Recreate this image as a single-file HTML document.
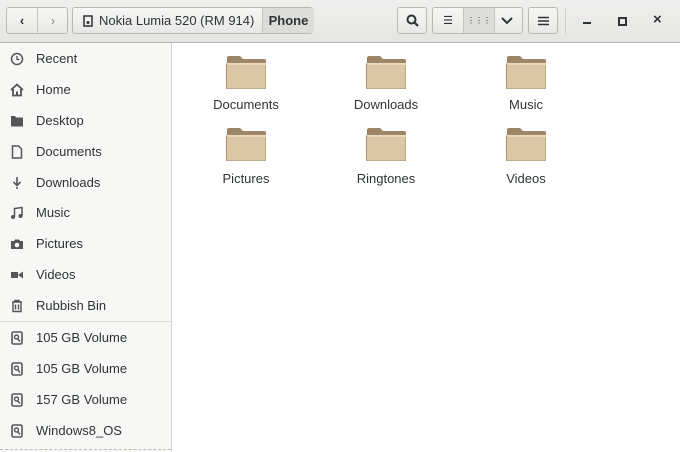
<html><head><style>
body{margin:0;width:680px;height:452px;overflow:hidden;font-family:"Liberation Sans",sans-serif;font-size:13px;color:#2e3436;background:#fff;position:relative}
.hdr{position:absolute;left:0;top:0;width:680px;height:42px;background:linear-gradient(#f0efee,#e6e5e3);border-bottom:1px solid #b6b6b3}
.btn{position:absolute;top:7px;height:27px;border:1px solid #b8b8b4;border-radius:3px;background:linear-gradient(#f6f6f5,#e8e8e6);box-sizing:border-box;display:flex;align-items:center;justify-content:center;color:#2e3436}
.side{position:absolute;left:0;top:43px;width:171px;height:409px;background:#f7f7f6;border-right:1px solid #cfcfcd}
.it{position:absolute;left:36px;font-size:13px}
.ic{position:absolute;left:10px;width:14px;height:14px}
.fold{position:absolute;width:40px;height:34px}
.lab{position:absolute;width:140px;text-align:center;font-size:13px}
</style></head><body>
<div class="hdr">
<div class="btn" style="left:6px;width:62px"><span style="position:absolute;left:0;width:30px;height:25px;border-right:1px solid #c4c4c0;display:flex;align-items:center;justify-content:center;font-weight:bold">&#8249;</span><span style="position:absolute;left:31px;width:30px;text-align:center;color:#888">&#8250;</span></div>
<div class="btn" style="left:72px;width:241px;justify-content:flex-start"><svg style="margin-left:10px" width="10" height="12" viewBox="0 0 10 12"><rect x="1" y="1" width="8" height="10" fill="none" stroke="#2e3436" stroke-width="1.5"/><circle cx="5" cy="7.5" r="1.5" fill="#2e3436"/></svg><span style="margin-left:6px">Nokia Lumia 520 (RM 914)</span><span style="position:absolute;left:189px;top:0;height:25px;width:51px;border-left:1px solid #c4c4c0;background:#dcdcd9;display:flex;align-items:center;justify-content:center;font-weight:bold">Phone</span></div>
<div class="btn" style="left:397px;width:30px"><svg width="13" height="13" viewBox="0 0 13 13"><circle cx="5.5" cy="5.5" r="4" fill="none" stroke="#2e3436" stroke-width="2"/><path d="M8.5 8.5L12 12" stroke="#2e3436" stroke-width="2.2"/></svg></div>
<div class="btn" style="left:432px;width:91px"><span style="position:absolute;left:0;width:30px;text-align:center;font-size:11px">&#9776;</span><span style="position:absolute;left:30px;width:30px;height:25px;background:#dcdcd9;border-left:1px solid #c4c4c0;border-right:1px solid #c4c4c0;display:flex;align-items:center;justify-content:center;font-size:8px">&#8942;&#8942;&#8942;</span><svg style="position:absolute;left:68px" width="12" height="8" viewBox="0 0 12 8"><path d="M1 1L6 6L11 1" fill="none" stroke="#2e3436" stroke-width="2"/></svg></div>
<div class="btn" style="left:528px;width:30px"><svg width="11" height="10"><path d="M0 1.5H11M0 5H11M0 8.5H11" stroke="#2e3436" stroke-width="1.6"/></svg></div>
<div style="position:absolute;left:565px;top:8px;width:1px;height:26px;background:#cdcdca"></div>
<div style="position:absolute;left:583px;top:22px;width:8px;height:2px;background:#2e3436"></div>
<div style="position:absolute;left:618px;top:17px;width:5px;height:5px;border:2px solid #2e3436"></div>
<div style="position:absolute;left:653px;top:11px;font-size:15px;font-weight:bold">&#215;</div>
</div>
<div class="side">
<svg class="ic" style="top:9px" viewBox="0 0 14 14"><circle cx="7" cy="7" r="5.5" fill="none" stroke="#555" stroke-width="1.5"/><path d="M7 4V7.5H9.5" fill="none" stroke="#555" stroke-width="1.3"/></svg><div class="it" style="top:8px">Recent</div>
<svg class="ic" style="top:40px" viewBox="0 0 14 14"><path d="M1 7L7 1.5L13 7M3 6V12.5H11V6" fill="none" stroke="#555" stroke-width="1.8"/><rect x="6" y="8.5" width="2" height="4" fill="#555"/></svg><div class="it" style="top:39px">Home</div>
<svg class="ic" style="top:71px" viewBox="0 0 14 14"><path d="M1 2H5L6 3.5H13V12.5H1Z" fill="#555"/></svg><div class="it" style="top:70px">Desktop</div>
<svg class="ic" style="top:102px" viewBox="0 0 14 14"><path d="M2.5 1H8.5L11.5 4V13H2.5Z" fill="none" stroke="#555" stroke-width="1.5"/></svg><div class="it" style="top:101px">Documents</div>
<svg class="ic" style="top:133px" viewBox="0 0 14 14"><path d="M7 1V9M3.5 6L7 9.5L10.5 6" fill="none" stroke="#555" stroke-width="1.6"/><circle cx="7" cy="12" r="1" fill="#555"/></svg><div class="it" style="top:132px">Downloads</div>
<svg class="ic" style="top:163px" viewBox="0 0 14 14"><path d="M4.5 11V2.5L12 1.5V10" fill="none" stroke="#555" stroke-width="1.5"/><circle cx="3" cy="11" r="2" fill="#555"/><circle cx="10.5" cy="10" r="2" fill="#555"/></svg><div class="it" style="top:162px">Music</div>
<svg class="ic" style="top:194px" viewBox="0 0 14 14"><path d="M1 4H4L5 2.5H9L10 4H13V12H1Z" fill="#555"/><circle cx="7" cy="8" r="2.3" fill="#f7f7f6"/></svg><div class="it" style="top:193px">Pictures</div>
<svg class="ic" style="top:225px" viewBox="0 0 14 14"><rect x="1" y="4" width="7" height="6" fill="#555"/><path d="M8 7L13 3.5V10.5Z" fill="#555"/></svg><div class="it" style="top:224px">Videos</div>
<svg class="ic" style="top:256px" viewBox="0 0 14 14"><path d="M2 3H12M5 3V1.5H9V3M3 3V12.5H11V3M5.5 5.5V10.5M8.5 5.5V10.5" fill="none" stroke="#555" stroke-width="1.4"/></svg><div class="it" style="top:255px">Rubbish Bin</div>
<div style="position:absolute;left:0;top:278px;width:171px;height:1px;background:#dcdcda"></div>
<svg class="ic" style="top:288px" viewBox="0 0 14 14"><rect x="2" y="1" width="10" height="12" rx="1.5" fill="none" stroke="#555" stroke-width="1.6"/><circle cx="6.5" cy="6" r="2" fill="none" stroke="#555" stroke-width="1.4"/><path d="M7.5 7.5L10 10.5" stroke="#555" stroke-width="1.4"/></svg><div class="it" style="top:287px">105 GB Volume</div>
<svg class="ic" style="top:319px" viewBox="0 0 14 14"><rect x="2" y="1" width="10" height="12" rx="1.5" fill="none" stroke="#555" stroke-width="1.6"/><circle cx="6.5" cy="6" r="2" fill="none" stroke="#555" stroke-width="1.4"/><path d="M7.5 7.5L10 10.5" stroke="#555" stroke-width="1.4"/></svg><div class="it" style="top:318px">105 GB Volume</div>
<svg class="ic" style="top:350px" viewBox="0 0 14 14"><rect x="2" y="1" width="10" height="12" rx="1.5" fill="none" stroke="#555" stroke-width="1.6"/><circle cx="6.5" cy="6" r="2" fill="none" stroke="#555" stroke-width="1.4"/><path d="M7.5 7.5L10 10.5" stroke="#555" stroke-width="1.4"/></svg><div class="it" style="top:349px">157 GB Volume</div>
<svg class="ic" style="top:381px" viewBox="0 0 14 14"><rect x="2" y="1" width="10" height="12" rx="1.5" fill="none" stroke="#555" stroke-width="1.6"/><circle cx="6.5" cy="6" r="2" fill="none" stroke="#555" stroke-width="1.4"/><path d="M7.5 7.5L10 10.5" stroke="#555" stroke-width="1.4"/></svg><div class="it" style="top:380px">Windows8_OS</div>
<div style="position:absolute;left:0;top:406px;width:171px;border-top:1px dashed #bbb"></div>
</div>
<svg width="0" height="0"><defs><g id="f"><path d="M1 3Q1 1 3 1H14L17 4H38Q40 4 40 6V32H1Z" fill="#9c8566"/><rect x="0.5" y="8" width="39.5" height="26" rx="1.5" fill="#dcc6a5" stroke="#a88f6c"/><rect x="1" y="8" width="39" height="2" fill="#e9d8bd"/></g></defs></svg>
<svg class="fold" style="left:226px;top:55px"><use href="#f"/></svg>
<svg class="fold" style="left:366px;top:55px"><use href="#f"/></svg>
<svg class="fold" style="left:506px;top:55px"><use href="#f"/></svg>
<svg class="fold" style="left:226px;top:127px"><use href="#f"/></svg>
<svg class="fold" style="left:366px;top:127px"><use href="#f"/></svg>
<svg class="fold" style="left:506px;top:127px"><use href="#f"/></svg>
<div class="lab" style="left:176px;top:97px">Documents</div>
<div class="lab" style="left:316px;top:97px">Downloads</div>
<div class="lab" style="left:456px;top:97px">Music</div>
<div class="lab" style="left:176px;top:171px">Pictures</div>
<div class="lab" style="left:316px;top:171px">Ringtones</div>
<div class="lab" style="left:456px;top:171px">Videos</div>
</body></html>
